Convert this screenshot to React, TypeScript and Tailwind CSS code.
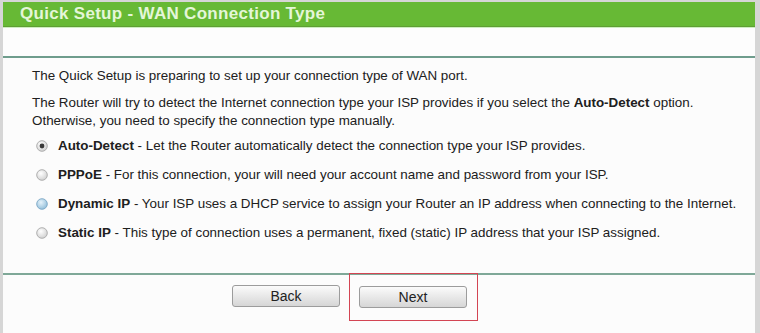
import React from 'react';

const options = [
  { label: 'Auto-Detect', text: ' - Let the Router automatically detect the connection type your ISP provides.', state: 'checked' },
  { label: 'PPPoE', text: ' - For this connection, your will need your account name and password from your ISP.', state: 'off' },
  { label: 'Dynamic IP', text: ' - Your ISP uses a DHCP service to assign your Router an IP address when connecting to the Internet.', state: 'hover' },
  { label: 'Static IP', text: ' - This type of connection uses a permanent, fixed (static) IP address that your ISP assigned.', state: 'off' },
];

function Radio({ state }: { state: string }) {
  const fill = state === 'hover' ? 'url(#rh)' : 'url(#rg)';
  return (
    <svg width="12" height="12" viewBox="0 0 12 12" className="shrink-0">
      <defs>
        <radialGradient id="rg" cx="40%" cy="35%" r="70%">
          <stop offset="0%" stopColor="#ffffff" />
          <stop offset="100%" stopColor="#cfcfcf" />
        </radialGradient>
        <radialGradient id="rh" cx="40%" cy="35%" r="70%">
          <stop offset="0%" stopColor="#e6f3fb" />
          <stop offset="100%" stopColor="#8fbcd8" />
        </radialGradient>
      </defs>
      <circle cx="6" cy="6" r="5.3" fill={fill} stroke={state === 'hover' ? '#7aa7c6' : '#a8a8a8'} strokeWidth="0.9" />
      {state === 'checked' && <circle cx="6" cy="6" r="2.4" fill="#3a3a3a" />}
    </svg>
  );
}

export default function App() {
  return (
    <div className="w-[760px] h-[333px] bg-[#d6d6d6] pt-[2px] overflow-hidden" style={{ fontFamily: '"Liberation Sans", Arial, sans-serif' }}>
      <div className="flex h-full">
        <div className="ml-[3px] w-[752px] bg-[#fcfcfc] flex flex-col">
          {/* Header */}
          <div className="h-[25px] bg-[#67b935] border-b border-[#5f9e34] flex items-center pl-[17px]">
            <span className="text-[17px] font-bold text-[#e4f6d8] tracking-[0.3px]">Quick Setup - WAN Connection Type</span>
          </div>
          <div className="h-px bg-[#cdeec0]" />
          <div className="h-[28px] bg-[#fdfdfd]" />
          <div className="h-[2px] bg-[#6f9d8d]" />

          {/* Body */}
          <div className="pl-[29px] pt-[9px] text-[13.4px] text-[#202020] leading-[18px]">
            <p>The Quick Setup is preparing to set up your connection type of WAN port.</p>
            <p className="mt-[9px]">
              The Router will try to detect the Internet connection type your ISP provides if you select the <b>Auto-Detect</b> option.
              <br />
              Otherwise, you need to specify the connection type manually.
            </p>
            <div className="mt-[7px] ml-[4px] flex flex-col gap-[11px]">
              {options.map((o) => (
                <div key={o.label} className="flex items-center gap-[10px]">
                  <Radio state={o.state} />
                  <span>
                    <b>{o.label}</b>
                    {o.text}
                  </span>
                </div>
              ))}
            </div>
          </div>

          <div className="mt-[31px] h-[2px] bg-[#7fa898]" />

          {/* Buttons */}
          <div className="flex pl-[229px] pt-[10px] gap-[19px]">
            <button className="w-[108px] h-[22px] rounded-[3px] border border-[#9c9c9c] bg-gradient-to-b from-[#fbfbfb] to-[#d6d6d6] text-[14px] text-[#222]">
              Back
            </button>
            <div className="relative">
              <button className="w-[108px] h-[22px] rounded-[3px] border border-[#9c9c9c] bg-gradient-to-b from-[#fbfbfb] to-[#d6d6d6] text-[14px] text-[#222]">
                Next
              </button>
              <div className="absolute left-[-10px] top-[-12px] w-[129px] h-[48px] border border-[#d34553]" />
            </div>
          </div>
        </div>
      </div>
    </div>
  );
}
